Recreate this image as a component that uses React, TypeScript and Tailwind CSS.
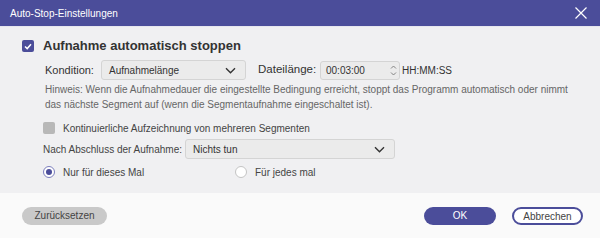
import React, { useState } from 'react';

const font = { fontFamily: '"Liberation Sans", Arial, sans-serif' };

const Chevron = () => (
  <svg width="11" height="7" viewBox="0 0 11 7" className="shrink-0">
    <path d="M1 1.2 L5.5 5.7 L10 1.2" fill="none" stroke="#333" strokeWidth="1.4" />
  </svg>
);

const Select = ({ value, className }: { value: string; className: string }) => (
  <div
    className={`flex h-5 items-center justify-between rounded-[3px] border border-[#d4d4d4] bg-[#ebebeb] pl-[7px] pr-[9px] text-[10px] text-[#333] ${className}`}
  >
    <span>{value}</span>
    <Chevron />
  </div>
);

const Radio = ({ checked, label }: { checked: boolean; label: string }) => (
  <label className="flex items-center gap-[8px]">
    <span
      className={`flex h-3 w-3 items-center justify-center rounded-full ${
        checked ? 'border-[1.5px] border-[#7c7ebd] bg-white' : 'border border-[#c4c4c4] bg-white'
      }`}
    >
      {checked && <span className="h-[6px] w-[6px] rounded-full bg-[#4b4d9a]" />}
    </span>
    <span>{label}</span>
  </label>
);

const App = () => {
  const [mode] = useState('once');

  return (
    <div className="flex h-[238px] w-[600px] flex-col bg-[#f0f0f2] text-[10px] text-[#444]" style={font}>
      {/* Titelleiste */}
      <div className="flex h-[27px] shrink-0 items-center justify-between border-b border-[#e6e6ee] bg-[#4b4d9a] pl-[10px] pr-[13px] text-white">
        <span className="text-[10px]">Auto-Stop-Einstellungen</span>
        <svg width="12" height="12" viewBox="0 0 12 12">
          <path d="M0.5 0.5 L11.5 11.5 M11.5 0.5 L0.5 11.5" stroke="#fff" strokeWidth="1.2" />
        </svg>
      </div>

      {/* Inhalt */}
      <div className="flex flex-1 flex-col pl-[22px]">
        <div className="mt-[12px] flex h-[14px] items-center gap-[9px]">
          <span className="flex h-3 w-3 items-center justify-center rounded-[2px] bg-[#4b4d9a]">
            <svg width="8" height="7" viewBox="0 0 8 7">
              <path d="M1 3.5 L3.2 5.6 L7 1.3" fill="none" stroke="#fff" strokeWidth="1.5" />
            </svg>
          </span>
          <span className="text-[13px] font-bold text-[#333]">Aufnahme automatisch stoppen</span>
        </div>

        <div className="mt-[7px] flex h-5 items-center pl-[23px]">
          <span className="w-[56px] text-[11px] text-[#333]">Kondition:</span>
          <Select value="Aufnahmelänge" className="w-[145px]" />
          <span className="ml-[12px] w-[62px] text-[11.5px] text-[#333]">Dateilänge:</span>
          <div className="flex h-[19px] w-[80px] items-center justify-between rounded-[3px] border border-[#d4d4d4] bg-[#ebebeb] pl-[5px] pr-[2px] text-[10px] text-[#333]">
            <span>00:03:00</span>
            <svg width="7" height="13" viewBox="0 0 7 13">
              <path d="M1 4.5 L3.5 2 L6 4.5 M1 8.5 L3.5 11 L6 8.5" fill="none" stroke="#777" strokeWidth="0.9" />
            </svg>
          </div>
          <span className="ml-[2px] text-[10px] text-[#333]">HH:MM:SS</span>
        </div>

        <p className="mt-[2px] whitespace-nowrap pl-[23px] leading-[15px] text-[#666]">
          Hinweis: Wenn die Aufnahmedauer die eingestellte Bedingung erreicht, stoppt das Programm automatisch oder nimmt
          <br />
          das nächste Segment auf (wenn die Segmentaufnahme eingeschaltet ist).
        </p>

        <div className="mt-[10px] flex h-3 items-center gap-[8px] pl-[21px]">
          <span className="h-3 w-3 rounded-[2px] bg-[#b8b8b8]" />
          <span>Kontinuierliche Aufzeichnung von mehreren Segmenten</span>
        </div>

        <div className="mt-[5px] flex h-5 items-center pl-[21px]">
          <span className="w-[142px] whitespace-nowrap">Nach Abschluss der Aufnahme:</span>
          <Select value="Nichts tun" className="w-[210px]" />
        </div>

        <div className="mt-[6px] flex h-[14px] items-center pl-[21px]">
          <div className="w-[192px]">
            <Radio checked={mode === 'once'} label="Nur für dieses Mal" />
          </div>
          <Radio checked={mode === 'always'} label="Für jedes mal" />
        </div>
      </div>

      {/* Fußleiste */}
      <div className="flex h-[45px] shrink-0 items-center justify-between bg-[#fafafa] pl-[22px] pr-[17px]">
        <button className="h-[18px] w-[85px] rounded-full bg-[#c9c9c9] text-[10px] text-[#444]">Zurücksetzen</button>
        <div className="flex gap-[16px]">
          <button className="h-[18px] w-[72px] rounded-full bg-[#4b4d9a] text-[10px] text-white">OK</button>
          <button className="h-[18px] w-[71px] rounded-full border-2 border-[#4b4d9a] bg-white text-[10px] text-[#444]">
            Abbrechen
          </button>
        </div>
      </div>
    </div>
  );
};

export default App;
